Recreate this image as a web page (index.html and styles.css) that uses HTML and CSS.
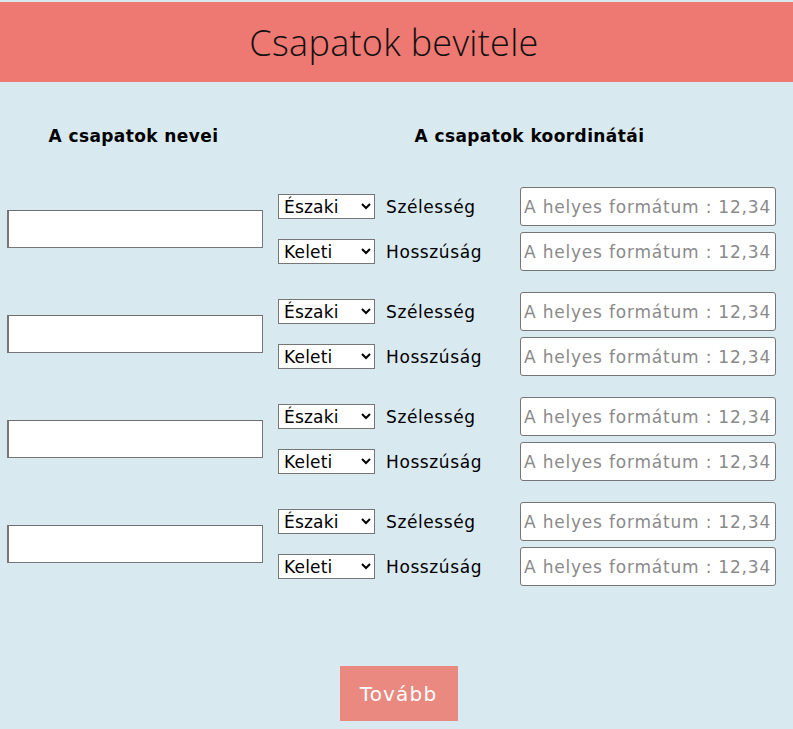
FILE: index.html
```html
<!DOCTYPE html>
<html lang="hu">
<head>
<meta charset="utf-8">
<title>Csapatok bevitele</title>
<link rel="stylesheet" href="styles.css">
</head>
<body>
<header class="top">
  <h1 class="title">Csapatok bevitele</h1>
</header>
<main class="form">
  <div class="heads">
    <h2 class="head head-names">A csapatok nevei</h2>
    <h2 class="head head-coords">A csapatok koordinátái</h2>
  </div>

  <div class="group">
    <input class="name" type="text">
    <div class="coords">
      <div class="coord-row">
        <select class="dir"><option>Északi</option><option>Déli</option></select>
        <span class="lbl">Szélesség</span>
        <input class="val" type="text" placeholder="A helyes formátum : 12,34">
      </div>
      <div class="coord-row">
        <select class="dir"><option>Keleti</option><option>Nyugati</option></select>
        <span class="lbl">Hosszúság</span>
        <input class="val" type="text" placeholder="A helyes formátum : 12,34">
      </div>
    </div>
  </div>

  <div class="group">
    <input class="name" type="text">
    <div class="coords">
      <div class="coord-row">
        <select class="dir"><option>Északi</option><option>Déli</option></select>
        <span class="lbl">Szélesség</span>
        <input class="val" type="text" placeholder="A helyes formátum : 12,34">
      </div>
      <div class="coord-row">
        <select class="dir"><option>Keleti</option><option>Nyugati</option></select>
        <span class="lbl">Hosszúság</span>
        <input class="val" type="text" placeholder="A helyes formátum : 12,34">
      </div>
    </div>
  </div>

  <div class="group">
    <input class="name" type="text">
    <div class="coords">
      <div class="coord-row">
        <select class="dir"><option>Északi</option><option>Déli</option></select>
        <span class="lbl">Szélesség</span>
        <input class="val" type="text" placeholder="A helyes formátum : 12,34">
      </div>
      <div class="coord-row">
        <select class="dir"><option>Keleti</option><option>Nyugati</option></select>
        <span class="lbl">Hosszúság</span>
        <input class="val" type="text" placeholder="A helyes formátum : 12,34">
      </div>
    </div>
  </div>

  <div class="group">
    <input class="name" type="text">
    <div class="coords">
      <div class="coord-row">
        <select class="dir"><option>Északi</option><option>Déli</option></select>
        <span class="lbl">Szélesség</span>
        <input class="val" type="text" placeholder="A helyes formátum : 12,34">
      </div>
      <div class="coord-row">
        <select class="dir"><option>Keleti</option><option>Nyugati</option></select>
        <span class="lbl">Hosszúság</span>
        <input class="val" type="text" placeholder="A helyes formátum : 12,34">
      </div>
    </div>
  </div>

  <div class="actions">
    <button class="next" type="button">Tovább</button>
  </div>
</main>
</body>
</html>
```

FILE: styles.css
```css
html, body {
  margin: 0;
  padding: 0;
}
body {
  background: #d9e9f0;
  font-family: "DejaVu Sans", Verdana, sans-serif;
  color: #000;
  min-height: 729px;
}
.top {
  margin-top: 2px;
  height: 80px;
  background: #ee7872;
  display: flex;
  align-items: center;
  justify-content: center;
}
.title {
  margin: 0;
  font-family: "Open Sans", sans-serif;
  font-weight: 300;
  font-size: 36px;
  letter-spacing: 0.3px;
  color: #111;
  padding-right: 5px;
}
.form {
  padding: 0 17px 0 7px;
  display: flex;
  flex-direction: column;
}
.heads {
  display: flex;
  height: 105px;
  align-items: flex-start;
  padding-top: 44px;
  box-sizing: border-box;
}
.head {
  margin: 0;
  font-size: 17px;
  letter-spacing: 0.4px;
  font-weight: bold;
  text-align: center;
}
.head-names {
  width: 256px;
}
.head-coords {
  margin-left: 15px;
  width: 507px;
  padding-left: 8px;
  box-sizing: border-box;
}
.group {
  display: flex;
  align-items: center;
  gap: 15px;
  margin-bottom: 21px;
}
.name {
  width: 256px;
  height: 38px;
  box-sizing: border-box;
  margin: 0;
  background: #fff;
  border: 1px solid #767676;
  border-left-width: 2px;
  border-top-color: #6f6f6f;
}
.coords {
  display: flex;
  flex-direction: column;
  gap: 6px;
}
.coord-row {
  display: flex;
  align-items: center;
}
.dir {
  width: 97px;
  height: 25px;
  box-sizing: border-box;
  margin: 0;
  font-family: "DejaVu Sans", sans-serif;
  font-size: 17px;
  letter-spacing: 0.2px;
  background: #fff;
  border: 1px solid #767676;
  border-radius: 0;
  padding: 0 1px;
  color: #000;
}
.lbl {
  width: 145px;
  padding-left: 11px;
  box-sizing: border-box;
  font-size: 17px;
  letter-spacing: 0.6px;
}
.val {
  width: 256px;
  height: 39px;
  box-sizing: border-box;
  margin: 0;
  padding: 0 3px;
  font-family: "DejaVu Sans", sans-serif;
  font-size: 17px;
  letter-spacing: 0.8px;
  background: #fff;
  border: 1px solid #767676;
  border-radius: 3px;
}
.val::placeholder {
  color: #8a8a8a;
}
.actions {
  display: flex;
  justify-content: center;
  padding-top: 59px;
  padding-left: 14px;
}
.next {
  width: 118px;
  height: 55px;
  border: none;
  background: #ea8980;
  color: #fff;
  font-family: "DejaVu Sans", sans-serif;
  font-size: 20px;
  letter-spacing: 1.2px;
  cursor: pointer;
}
```
